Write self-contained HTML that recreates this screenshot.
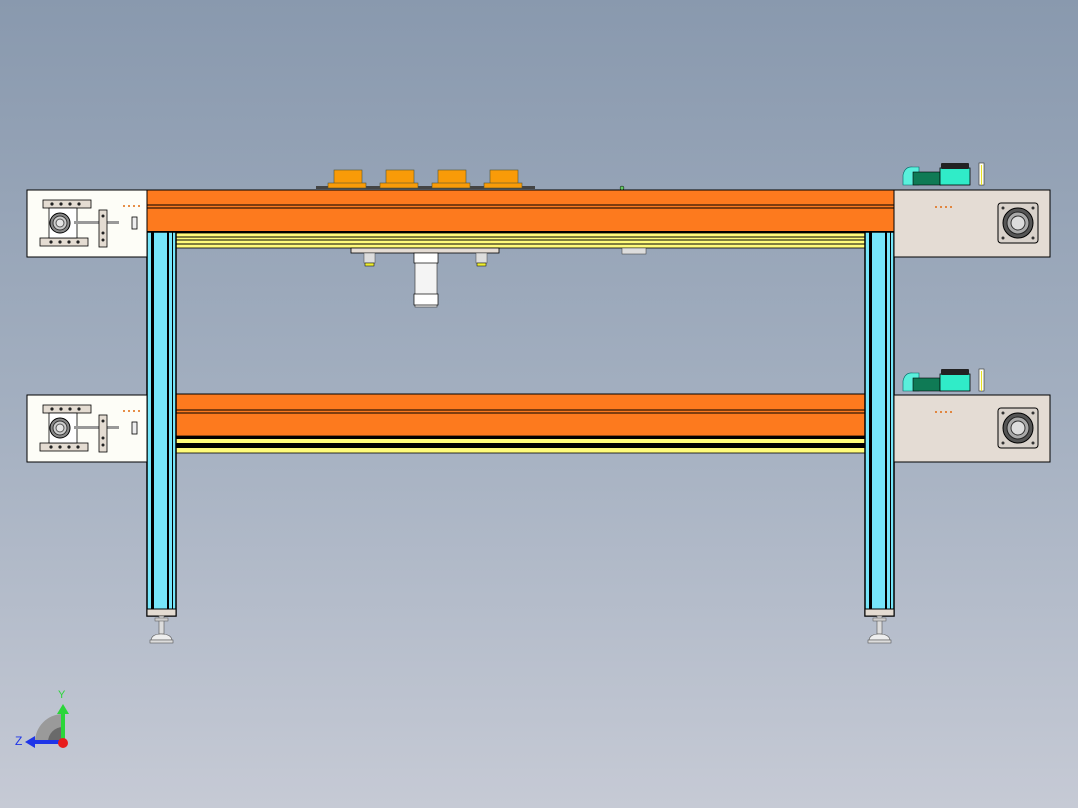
<!DOCTYPE html>
<html><head><meta charset="utf-8"><style>
html,body{margin:0;padding:0;width:1078px;height:808px;overflow:hidden}
body{background:linear-gradient(#8999ae,#a3afc0 50%,#c6cad5)}
svg{position:absolute;left:0;top:0}
</style></head><body>
<svg width="1078" height="808" viewBox="0 0 1078 808" font-family="Liberation Sans, sans-serif">
<defs>
<g id="leg">
<rect x="0" y="0" width="29" height="384" fill="#76e6fa" stroke="#000" stroke-width="1.5"/>
<rect x="4" y="0" width="3" height="378" fill="#000"/>
<rect x="20" y="0" width="2" height="378" fill="#000"/>
<rect x="25" y="0" width="1" height="378" fill="#000"/>
<rect x="0" y="377" width="29" height="7" fill="#e4dcd2" stroke="#000"/>
<rect x="12" y="384" width="5" height="18" fill="#ddd" stroke="#555" stroke-width="0.6"/>
<rect x="8" y="386" width="13" height="3" fill="#cfcfcf" stroke="#555" stroke-width="0.5"/>
<path d="M4 408 Q5 402 14 402 Q24 402 25 408 Z" fill="#eee" stroke="#555" stroke-width="0.6"/>
<rect x="3" y="408" width="23" height="3" fill="#ddd" stroke="#555" stroke-width="0.6"/>
</g>
<g id="lpanel">
<rect x="0" y="0" width="120" height="67" fill="#fdfdf7" stroke="#000"/>
<rect x="16" y="10" width="48" height="8" fill="#e4dcd2" stroke="#000" stroke-width="0.8"/>
<rect x="13" y="48" width="48" height="8" fill="#e4dcd2" stroke="#000" stroke-width="0.8"/>
<g fill="#222"><circle cx="25" cy="14" r="1.6"/><circle cx="34" cy="14" r="1.6"/><circle cx="43" cy="14" r="1.6"/><circle cx="52" cy="14" r="1.6"/>
<circle cx="24" cy="52" r="1.6"/><circle cx="33" cy="52" r="1.6"/><circle cx="42" cy="52" r="1.6"/><circle cx="51" cy="52" r="1.6"/></g>
<rect x="22" y="18" width="28" height="30" fill="#fff" stroke="#000" stroke-width="0.8"/>
<circle cx="33" cy="33" r="10" fill="#888" stroke="#000"/><circle cx="33" cy="33" r="7" fill="#ccc" stroke="#333"/><circle cx="33" cy="33" r="4" fill="#e5e5e5" stroke="#555"/>
<rect x="47" y="31" width="45" height="3" fill="#999"/>
<rect x="72" y="20" width="8" height="37" fill="#e4dcd2" stroke="#000" stroke-width="0.8"/>
<circle cx="76" cy="26" r="1.5" fill="#222"/><circle cx="76" cy="43" r="1.5" fill="#222"/><circle cx="76" cy="50" r="1.5" fill="#222"/>
<rect x="105" y="27" width="5" height="12" fill="#eee" stroke="#000" stroke-width="0.8"/>
<g fill="#e06a10"><circle cx="97" cy="16" r="1"/><circle cx="102" cy="16" r="1"/><circle cx="107" cy="16" r="1"/><circle cx="112" cy="16" r="1"/></g>
</g>
<g id="rpanel">
<rect x="0" y="0" width="156" height="67" fill="#e4dcd4" stroke="#000"/>
<g fill="#e06a10"><circle cx="42" cy="17" r="1"/><circle cx="47" cy="17" r="1"/><circle cx="52" cy="17" r="1"/><circle cx="57" cy="17" r="1"/></g>
<rect x="104" y="13" width="40" height="40" rx="3" fill="#d9d2cb" stroke="#000"/>
<circle cx="124" cy="33" r="15" fill="#555" stroke="#000"/><circle cx="124" cy="33" r="11" fill="#aaa" stroke="#222"/><circle cx="124" cy="33" r="7" fill="#ddd" stroke="#333"/>
<g fill="#333"><circle cx="109" cy="18" r="1.5"/><circle cx="139" cy="18" r="1.5"/><circle cx="109" cy="48" r="1.5"/><circle cx="139" cy="48" r="1.5"/></g>
</g>
<g id="motor">
<path d="M8 12 Q10 3 18 4 L24 4 L24 22 L8 22 Z" fill="#5af0dc" stroke="#066" stroke-width="0.6"/>
<rect x="18" y="9" width="28" height="13" fill="#0f7a55" stroke="#000" stroke-width="0.6"/>
<rect x="45" y="5" width="30" height="17" fill="#30ecc8" stroke="#000" stroke-width="0.8"/>
<rect x="46" y="0" width="28" height="6" rx="1" fill="#222"/>
<rect x="84" y="0" width="5" height="22" fill="#fdfdf0" stroke="#333" stroke-width="0.6"/>
<rect x="86" y="2" width="1" height="20" fill="#e5e020"/>
</g>
</defs>

<!-- top beam -->
<rect x="147" y="190" width="747" height="42" fill="#fd7a1e" stroke="#000"/>
<line x1="147" y1="205" x2="894" y2="205" stroke="#000"/>
<line x1="147" y1="208" x2="894" y2="208" stroke="#000"/>
<rect x="147" y="231" width="747" height="2" fill="#000"/>
<rect x="176" y="233" width="689" height="15" fill="#fffb7a" stroke="#000" stroke-width="0.8"/>
<line x1="176" y1="237" x2="865" y2="237" stroke="#000"/>
<line x1="176" y1="240" x2="865" y2="240" stroke="#000"/>
<line x1="176" y1="244" x2="865" y2="244" stroke="#000"/>
<!-- cups -->
<rect x="316" y="186" width="219" height="3" fill="#444"/>
<g fill="#f99b08" stroke="#553" stroke-width="0.6">
<rect x="334" y="170" width="28" height="14"/><rect x="328" y="183" width="38" height="5"/>
<rect x="386" y="170" width="28" height="14"/><rect x="380" y="183" width="38" height="5"/>
<rect x="438" y="170" width="28" height="14"/><rect x="432" y="183" width="38" height="5"/>
<rect x="490" y="170" width="28" height="14"/><rect x="484" y="183" width="38" height="5"/>
</g>
<circle cx="622" cy="188" r="2" fill="#6c6" stroke="#000" stroke-width="0.5"/>
<!-- under plate & cylinder -->
<rect x="351" y="248" width="148" height="5" fill="#e4dcd4" stroke="#000" stroke-width="0.8"/>
<rect x="364" y="253" width="11" height="10" fill="#ddd" stroke="#444" stroke-width="0.5"/><rect x="365" y="263" width="9" height="3" fill="#ee3" stroke="#000" stroke-width="0.5"/>
<rect x="476" y="253" width="11" height="10" fill="#ddd" stroke="#444" stroke-width="0.5"/><rect x="477" y="263" width="9" height="3" fill="#ee3" stroke="#000" stroke-width="0.5"/>
<rect x="415" y="253" width="22" height="54" fill="#f4f4f4" stroke="#444" stroke-width="0.7"/>
<rect x="414" y="253" width="24" height="10" fill="#fff" stroke="#000" stroke-width="0.7"/>
<rect x="414" y="294" width="24" height="11" fill="#fff" stroke="#000" stroke-width="0.7"/>
<rect x="622" y="248" width="24" height="6" fill="#ddd" stroke="#333" stroke-width="0.5"/>
<!-- lower beam -->
<rect x="176" y="394" width="689" height="43" fill="#fd7a1e" stroke="#000"/>
<line x1="176" y1="410" x2="865" y2="410" stroke="#000"/>
<line x1="176" y1="413" x2="865" y2="413" stroke="#000"/>
<rect x="176" y="436" width="689" height="17" fill="#fffb7a" stroke="#000" stroke-width="0.8"/>
<rect x="176" y="436" width="689" height="3" fill="#000"/>
<rect x="176" y="443" width="689" height="5" fill="#000"/>
<!-- legs -->
<use href="#leg" x="147" y="232"/>
<use href="#leg" x="865" y="232"/>
<!-- panels -->
<use href="#lpanel" x="27" y="190"/>
<use href="#lpanel" x="27" y="395"/>
<use href="#rpanel" x="894" y="190"/>
<use href="#rpanel" x="894" y="395"/>
<use href="#motor" x="895" y="163"/>
<use href="#motor" x="895" y="369"/>
<!-- triad -->
<path d="M35 742 A28 28 0 0 1 63 714 L63 742 Z" fill="#9a9a9a"/>
<path d="M48 742 A15 15 0 0 1 63 727 L63 742 Z" fill="#6a6a6a"/>
<rect x="61" y="712" width="4" height="30" fill="#2bd63a"/>
<path d="M57 714 L63 704 L69 714 Z" fill="#2bd63a"/>
<rect x="33" y="740" width="30" height="4" fill="#1f35e8"/>
<path d="M35 736 L25 742 L35 748 Z" fill="#1f35e8"/>
<circle cx="63" cy="743" r="5" fill="#e81c1c"/>
<text x="58" y="698" font-size="11" fill="#2bd63a">Y</text>
<text x="15" y="745" font-size="12" fill="#1f35e8">Z</text>
</svg>
</body></html>
